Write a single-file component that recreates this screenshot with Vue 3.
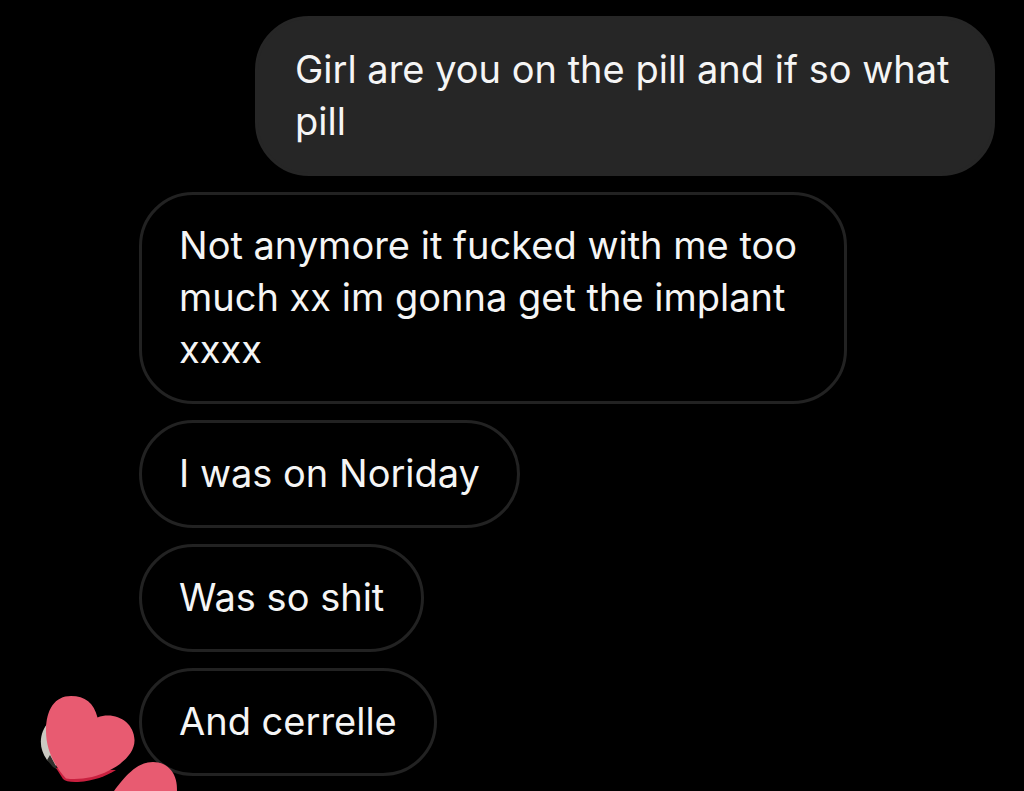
<script setup>
const messages = [
  { id: 1, from: 'me', text: 'Girl are you on the pill and if so what pill' },
  { id: 2, from: 'them', text: 'Not anymore it fucked with me too much xx im gonna get the implant xxxx' },
  { id: 3, from: 'them', text: 'I was on Noriday' },
  { id: 4, from: 'them', text: 'Was so shit' },
  { id: 5, from: 'them', text: 'And cerrelle' },
]
</script>

<template>
  <main class="chat">
    <ul class="thread">
      <li v-for="message in messages" :key="message.id" class="row" :class="message.from">
        <p class="bubble">{{ message.text }}</p>
      </li>
    </ul>
    <svg class="hearts" width="160" height="101" viewBox="30 690 160 101" aria-hidden="true">
      <path d="M49 722C39 732 38 748 47 760L56 766V722Z" fill="#cbc9c2" />
      <path d="M47 760L50 755L58 770L53 767Z" fill="#30302d" />
      <path d="M56 768L63 779Q66 782.500 78 782C94 781 106 776 116 770Z" fill="#c9203f" />
      <path d="M46 731C46 709 55 696 71 696C85 696 94 703 97.500 717.500C114 711 134 721 134.500 740C135 756 115 771 92 777Q78 780 66 778.500C55 767 46 750 46 731Z" fill="#e85b71" />
      <path d="M114 791C124 778 136 762 153 762C169 762 178 775 177 791Z" fill="#e85b71" />
    </svg>
  </main>
</template>

<style>
body {
  margin: 0;
  background: #000;
}
</style>

<style scoped>
.chat {
  position: relative;
  box-sizing: border-box;
  min-height: 100vh;
  padding: 16px 29px 15px 139px;
  overflow: hidden;
  background: #000;
  color: #f5f5f5;
  font-family: Inter, "Liberation Sans", sans-serif;
  font-size: 38px;
  line-height: 52px;
}

.thread {
  display: flex;
  flex-direction: column;
  gap: 16px;
  margin: 0;
  padding: 0;
  list-style: none;
}

.row {
  display: flex;
}

.row.me {
  justify-content: flex-end;
}

.bubble {
  box-sizing: border-box;
  max-width: 708px;
  margin: 0;
  padding: 24px 37px 26px;
  border: 3px solid #222;
  border-radius: 54px;
}

.me .bubble {
  max-width: 740px;
  border-color: #262626;
  background: #262626;
}

.hearts {
  position: absolute;
  bottom: 0;
  left: 30px;
}
</style>
